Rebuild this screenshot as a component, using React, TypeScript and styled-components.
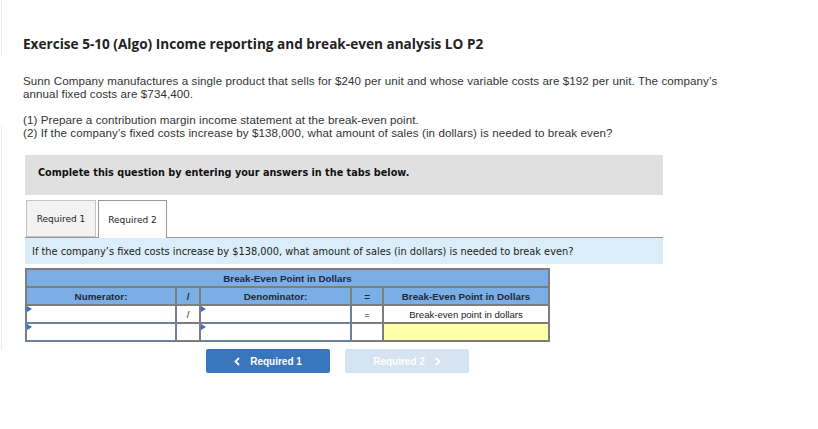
import * as React from 'react';
import styled, { createGlobalStyle } from 'styled-components';

const GlobalStyle = createGlobalStyle`
  html, body {
    margin: 0;
    padding: 0;
    background: #fff;
  }
  body {
    font-family: 'Open Sans', Lato, sans-serif;
    color: #333;
  }
`;

const Page = styled.main`
  display: flex;
  min-height: 429px;
`;

const EdgeRail = styled.div`
  width: 2px;
  display: flex;
  flex-direction: column;
  div {
    border-right: 1px solid #ececec;
  }
`;

const EdgeSeg = styled.div<{ h: number; gap?: number }>`
  height: ${p => p.h}px;
  margin-top: ${p => p.gap || 0}px;
`;

const Content = styled.div`
  padding: 35px 0 0 21px;
  width: 640px;
`;

const Title = styled.h1`
  margin: 0;
  font-family: 'Open Sans', sans-serif;
  font-weight: 700;
  font-size: 13.6px;
  line-height: 18px;
  color: #222;
  white-space: nowrap;
`;

const Para = styled.p<{ top: number }>`
  margin: ${p => p.top}px 0 0 0;
  font-family: 'Liberation Sans', Arial, sans-serif;
  font-size: 11.6px;
  letter-spacing: 0.08px;
  line-height: 13px;
  color: #333;
  width: 760px;
`;

const Instruction = styled.div`
  margin: 16px 0 0 2px;
  background: #e0e0e0;
  height: 40px;
  box-sizing: border-box;
  padding: 12px 13px 0;
  font-family: 'DejaVu Sans', Verdana, sans-serif;
  font-weight: 700;
  font-size: 9.7px;
  line-height: 12px;
  color: #111;
`;

const Tabs = styled.div`
  display: flex;
  gap: 2px;
  margin: 5px 0 0 3px;
  height: 37px;
  align-items: stretch;
`;

const Tab = styled.div<{ active?: boolean }>`
  box-sizing: border-box;
  width: ${p => (p.active ? 69 : 70)}px;
  display: flex;
  align-items: center;
  justify-content: center;
  font-family: 'DejaVu Sans', Verdana, sans-serif;
  font-size: 9px;
  color: #222;
  background: ${p => (p.active ? '#fff' : '#f2f2f2')};
  border: 1px solid ${p => (p.active ? '#999' : '#c4c4c4')};
  border-bottom: ${p => (p.active ? 'none' : '1px solid #c4c4c4')};
  margin-bottom: ${p => (p.active ? -1 : 0)}px;
  position: relative;
`;

const Question = styled.div`
  margin-left: 2px;
  height: 27px;
  box-sizing: border-box;
  border-top: 1px solid #999;
  background: #dbedf9;
  display: flex;
  align-items: center;
  padding-left: 7px;
  font-family: 'DejaVu Sans', Verdana, sans-serif;
  font-size: 9.8px;
  color: #222;
  white-space: nowrap;
`;

const Table = styled.table`
  margin: 4px 0 0 2px;
  border-collapse: collapse;
  border: 2px solid #7d7d7d;
  font-family: 'Liberation Sans', Arial, sans-serif;
  table-layout: fixed;
`;

const HeadCell = styled.th<{ w?: number }>`
  background: #7aaee4;
  border: 2px solid #7d7d7d;
  height: 16px;
  padding: 0;
  font-size: 9.8px;
  font-weight: 700;
  color: #1e2a38;
  text-align: center;
  width: ${p => (p.w ? `${p.w}px` : 'auto')};
`;

const Cell = styled.td<{ fill?: string; input?: boolean }>`
  border: 2px solid ${p => (p.input ? '#6d819a' : '#7d7d7d')};
  height: 16px;
  padding: 0;
  background: ${p => p.fill || '#fff'};
  font-size: 9.6px;
  color: #222;
  text-align: center;
  position: relative;
`;

const Marker = styled.span`
  position: absolute;
  left: 0;
  top: 0;
  width: 0;
  height: 0;
  border-top: 3px solid transparent;
  border-bottom: 3px solid transparent;
  border-left: 5px solid #3a6ec4;
`;

const Nav = styled.div`
  display: flex;
  gap: 15px;
  margin: 7px 0 0 183px;
`;

const NavButton = styled.button<{ disabled?: boolean }>`
  width: 124px;
  height: 24px;
  border: none;
  border-radius: 2px;
  background: ${p => (p.disabled ? '#d6e3f1' : '#3a76bc')};
  color: #fff;
  font-family: 'Liberation Sans', Arial, sans-serif;
  font-weight: 700;
  font-size: 10px;
  display: flex;
  align-items: center;
  justify-content: center;
  gap: 10px;
  padding: 0;
  cursor: pointer;
`;

const Chevron = ({ dir }: { dir: 'left' | 'right' }) => (
  <svg width="6" height="9" viewBox="0 0 6 9">
    <path
      d={dir === 'left' ? 'M5 1 L1.5 4.5 L5 8' : 'M1 1 L4.5 4.5 L1 8'}
      fill="none"
      stroke="#fff"
      strokeWidth="1.8"
    />
  </svg>
);

const InputRow = ({ last }: { last?: boolean }) => (
  <tr>
    <Cell input><Marker /></Cell>
    <Cell>{last ? '' : '/'}</Cell>
    <Cell input><Marker /></Cell>
    <Cell>{last ? '' : '='}</Cell>
    <Cell fill={last ? '#ffffa8' : '#fff'}>
      {last ? '' : 'Break-even point in dollars'}
    </Cell>
  </tr>
);

const App: React.FunctionComponent = () => (
  <>
    <GlobalStyle />
    <Page>
      <EdgeRail>
        <EdgeSeg h={55} />
        <EdgeSeg h={225} gap={70} />
      </EdgeRail>
      <Content>
        <Title>Exercise 5-10 (Algo) Income reporting and break-even analysis LO P2</Title>
        <Para top={21}>
          Sunn Company manufactures a single product that sells for $240 per unit and whose variable costs are $192 per unit. The company’s
          <br />
          annual fixed costs are $734,400.
        </Para>
        <Para top={13}>
          (1) Prepare a contribution margin income statement at the break-even point.
          <br />
          (2) If the company’s fixed costs increase by $138,000, what amount of sales (in dollars) is needed to break even?
        </Para>
        <Instruction>Complete this question by entering your answers in the tabs below.</Instruction>
        <Tabs>
          <Tab>Required 1</Tab>
          <Tab active>Required 2</Tab>
        </Tabs>
        <Question>
          If the company’s fixed costs increase by $138,000, what amount of sales (in dollars) is needed to break even?
        </Question>
        <Table>
          <thead>
            <tr>
              <HeadCell colSpan={5}>Break-Even Point in Dollars</HeadCell>
            </tr>
            <tr>
              <HeadCell w={148}>Numerator:</HeadCell>
              <HeadCell w={22}>/</HeadCell>
              <HeadCell w={149}>Denominator:</HeadCell>
              <HeadCell w={30}>=</HeadCell>
              <HeadCell w={164}>Break-Even Point in Dollars</HeadCell>
            </tr>
          </thead>
          <tbody>
            <InputRow />
            <InputRow last />
          </tbody>
        </Table>
        <Nav>
          <NavButton>
            <Chevron dir="left" />
            Required 1
          </NavButton>
          <NavButton disabled>
            Required 2
            <Chevron dir="right" />
          </NavButton>
        </Nav>
      </Content>
    </Page>
  </>
);

export default App;
